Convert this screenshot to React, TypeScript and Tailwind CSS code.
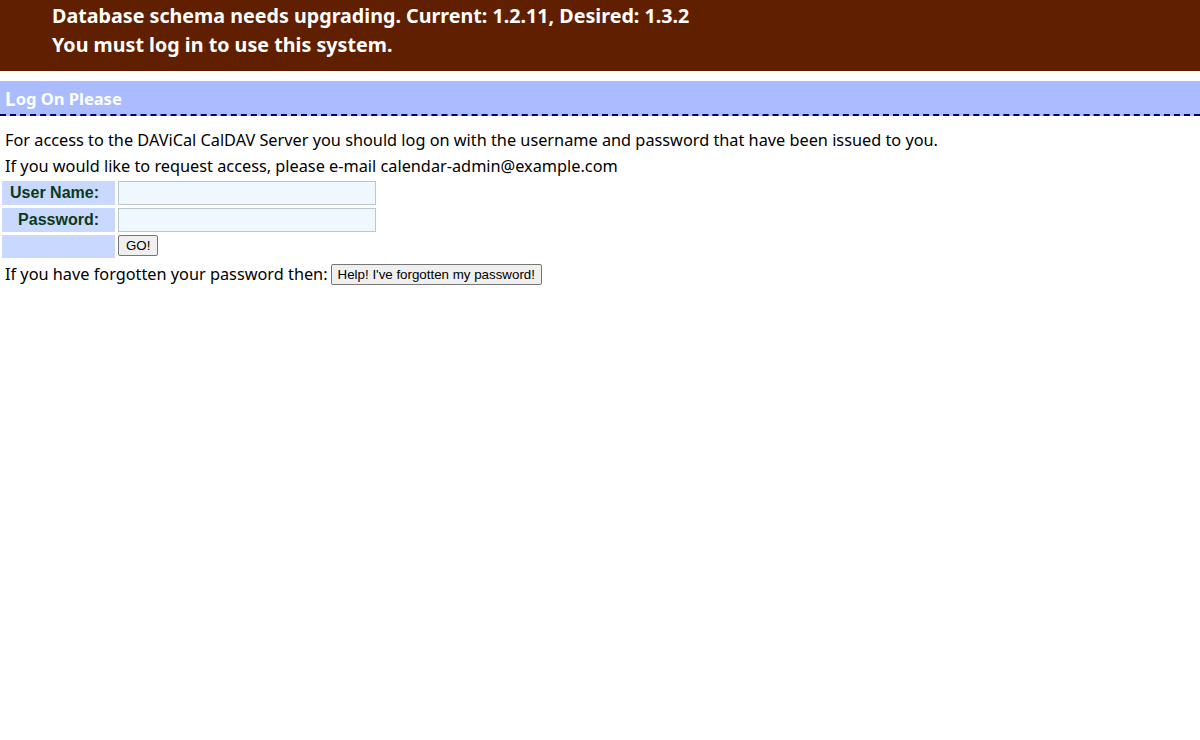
export default function App() {
  return (
    <div className="min-h-[740px] bg-white text-black" style={{ fontFamily: '"Noto Sans", "Open Sans", sans-serif' }}>
      <div className="h-[71px] bg-[#602000] pl-[52px] pt-[1px] text-[19.7px] font-bold leading-[29px] text-white">
        <div>Database schema needs upgrading. Current: 1.2.11, Desired: 1.3.2</div>
        <div>You must log in to use this system.</div>
      </div>
      <div className="mt-[10px] flex h-[35px] items-center border-b-2 border-dashed border-[#000066] bg-[#aabbff] pl-[5px] pt-[3px] text-[16.5px] font-bold text-white">
        <span className="text-[19px]">L</span>og On Please
      </div>
      <div className="px-[5px] pt-[11px] text-[16.3px] leading-[26px]">
        <p>For access to the DAViCal CalDAV Server you should log on with the username and password that have been issued to you.</p>
        <p>If you would like to request access, please e-mail calendar-admin@example.com</p>
      </div>
      <table className="-mt-[1px] border-separate border-spacing-x-[2px] border-spacing-y-[3px]" style={{ fontFamily: '"Liberation Sans", Arial, sans-serif' }}>
        <tbody>
          <tr>
            <th className="h-[24px] w-[113px] bg-[#c8d8ff] pr-[16px] text-right text-[16px] font-bold text-[#0a3a1a]">User Name:</th>
            <td className="p-0">
              <input className="ml-[1px] block h-[24px] w-[258px] border border-[#b8c8d0] bg-[#f0f8ff] px-1 text-[13px] outline-none" />
            </td>
          </tr>
          <tr>
            <th className="h-[24px] w-[113px] bg-[#c8d8ff] pr-[16px] text-right text-[16px] font-bold text-[#0a3a1a]">Password:</th>
            <td className="p-0">
              <input type="password" className="ml-[1px] block h-[24px] w-[258px] border border-[#b8c8d0] bg-[#f0f8ff] px-1 text-[13px] outline-none" />
            </td>
          </tr>
          <tr>
            <th className="h-[23px] w-[113px] bg-[#c8d8ff]"></th>
            <td className="p-0 align-top">
              <button className="ml-[1px] block h-[21px] rounded-[2px] border border-[#767676] bg-[#efefef] px-[7px] text-[13.33px] leading-[19px]">GO!</button>
            </td>
          </tr>
        </tbody>
      </table>
      <div className="flex items-center px-[5px] text-[16.3px] leading-[26px]">
        <span>If you have forgotten your password then:</span>
        <button
          className="ml-[3px] h-[21px] rounded-[2px] border border-[#767676] bg-[#efefef] px-[6px] text-[13.33px] leading-[19px]"
          style={{ fontFamily: '"Liberation Sans", Arial, sans-serif' }}
        >
          Help! I've forgotten my password!
        </button>
      </div>
    </div>
  );
}
